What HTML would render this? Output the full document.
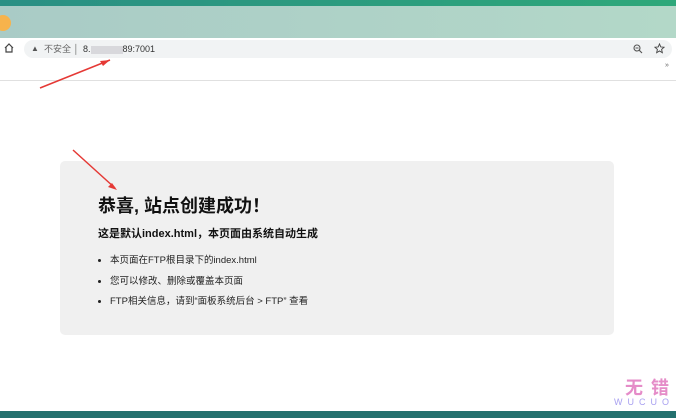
<!DOCTYPE html>
<html><head><meta charset="utf-8"><style>
body{margin:0;width:676px;height:418px;overflow:hidden;background:#fff;position:relative;font-family:"Liberation Sans","Noto Sans CJK SC",sans-serif}
.top{position:absolute;left:0;top:0;width:676px;height:6px;background:linear-gradient(90deg,#2a8f84,#2ea87a)}
.tab{position:absolute;left:0;top:6px;width:676px;height:32px;background:linear-gradient(90deg,#a9cbc6,#b3d8c8)}
.dot{position:absolute;left:-5px;top:15px;width:16px;height:16px;border-radius:50%;background:#f7b34c}
.bar{position:absolute;left:0;top:38px;width:676px;height:22px;background:#fff}
.url{position:absolute;left:24px;top:40px;width:648px;height:18px;border-radius:9px;background:#f1f3f4;font-size:9px;color:#333;line-height:18px}
.line{position:absolute;left:0;top:80px;width:676px;height:1px;background:#e0e0e0}
.card{position:absolute;left:60px;top:161px;width:554px;height:174px;background:#f0f0f0;border-radius:5px}
h1{position:absolute;left:38px;top:31px;margin:0;font-size:18px;font-weight:bold;color:#111}
h2{position:absolute;left:38px;top:64px;margin:0;font-size:11px;font-weight:bold;color:#111}
ul{position:absolute;left:38px;top:90px;margin:0;padding:0 0 0 12px;font-size:9.5px;color:#222;line-height:20.5px}
.bot{position:absolute;left:0;top:411px;width:676px;height:7px;background:#23706e}
</style></head><body>
<div class="top"></div><div class="tab"></div><div class="dot"></div>
<div class="bar"></div>
<svg style="position:absolute;left:4px;top:43px" width="10" height="10" viewBox="0 0 10 10"><path d="M1 5L5 1L9 5M2 4V9H8V4" fill="none" stroke="#444" stroke-width="1.2"/></svg>
<div class="url"><span style="position:absolute;left:7px;color:#555;font-size:8px">▲</span><span style="position:absolute;left:20px;color:#666">不安全 │</span><span style="position:absolute;left:59px">8.<span style="display:inline-block;width:32px;height:8px;background:#d8d8dc;vertical-align:middle"></span>89:7001</span>
<svg style="position:absolute;left:609px;top:4px" width="10" height="10" viewBox="0 0 10 10"><circle cx="4" cy="4" r="3" fill="none" stroke="#555" stroke-width="1.1"/><path d="M6.3 6.3L9 9M2.5 4H5.5" stroke="#555" stroke-width="1.1"/></svg>
<svg style="position:absolute;left:630px;top:3px" width="11" height="11" viewBox="0 0 12 12"><path d="M6 1L7.4 4.3L11 4.6L8.3 7L9.1 10.6L6 8.7L2.9 10.6L3.7 7L1 4.6L4.6 4.3Z" fill="none" stroke="#444" stroke-width="1"/></svg></div>
<span style="position:absolute;left:665px;top:62px;font-size:7px;color:#666">»</span>
<div class="line"></div>
<div class="card">
<h1>恭喜, 站点创建成功！</h1>
<h2>这是默认index.html，本页面由系统自动生成</h2>
<ul><li>本页面在FTP根目录下的index.html</li><li>您可以修改、删除或覆盖本页面</li><li>FTP相关信息，请到“面板系统后台 &gt; FTP” 查看</li></ul>
</div>
<svg style="position:absolute;left:0;top:0" width="676" height="418"><path d="M40 88L110 60" stroke="#e53935" stroke-width="1.5"/><path d="M110 60l-10 1l3 5z" fill="#e53935"/><path d="M73 150L115 188" stroke="#e53935" stroke-width="1.5"/><path d="M117 190l-9 -3l4 -4z" fill="#e53935"/></svg>
<div style="position:absolute;left:625px;top:374px;white-space:nowrap;font-size:18px;font-weight:bold;color:#e58cc8;letter-spacing:8px">无错</div>
<div style="position:absolute;left:614px;top:397px;white-space:nowrap;font-size:9px;color:#a8a0f0;letter-spacing:5px">WUCUO</div>
<div class="bot"></div>
</body></html>
